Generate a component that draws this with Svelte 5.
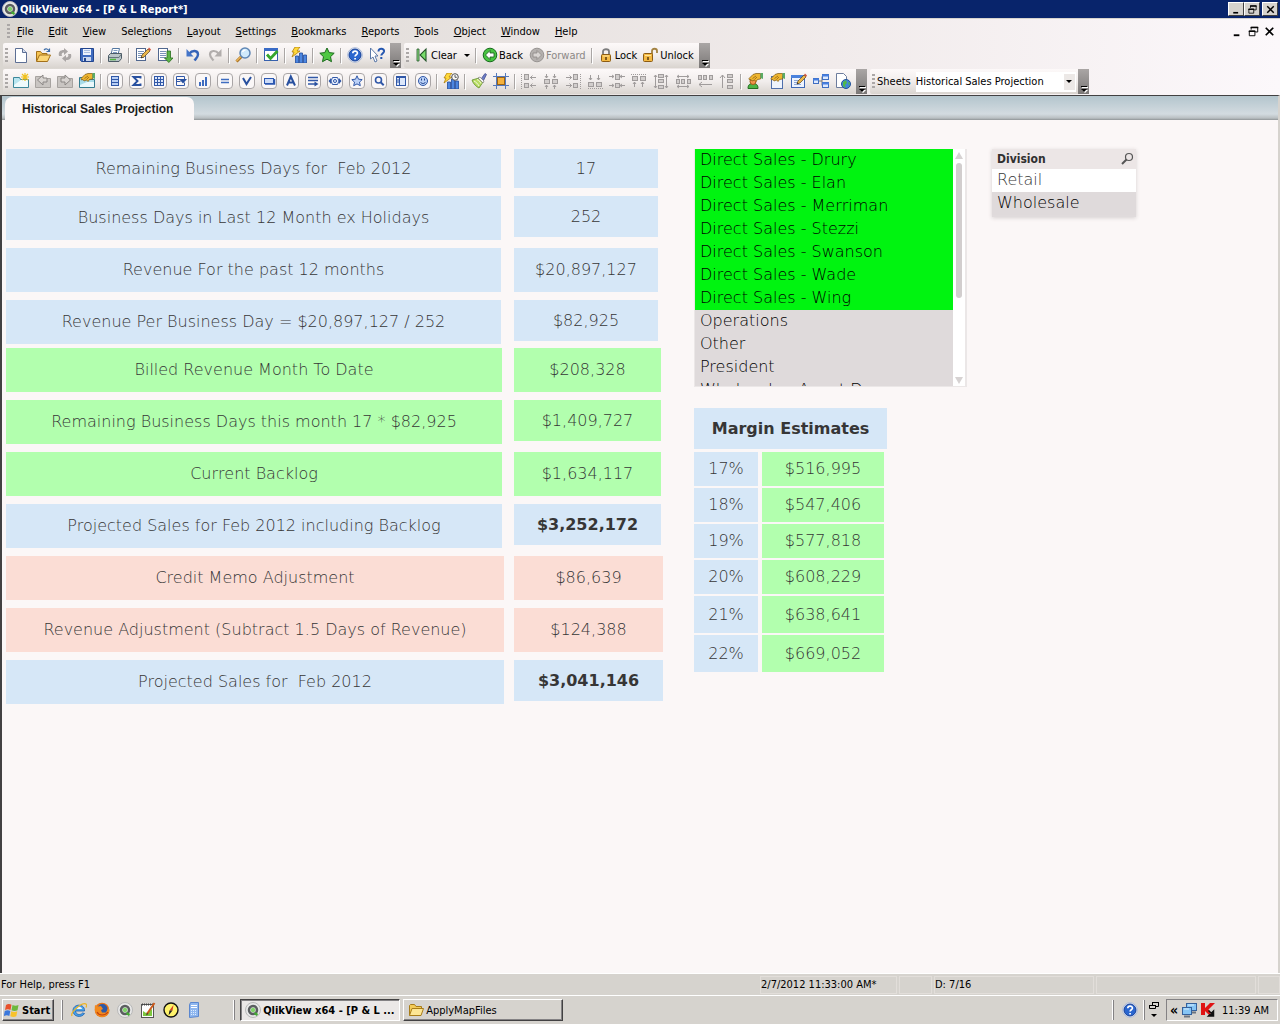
<script>
  const menus = [
    ["", "F", "ile"],
    ["", "E", "dit"],
    ["", "V", "iew"],
    ["Sele", "c", "tions"],
    ["", "L", "ayout"],
    ["", "S", "ettings"],
    ["", "B", "ookmarks"],
    ["", "R", "eports"],
    ["", "T", "ools"],
    ["", "O", "bject"],
    ["", "W", "indow"],
    ["", "H", "elp"],
  ];

  // "|" is a separator
  const standardBar = [
    "new", "open", "reload", "save", "|", "print", "|", "editScript", "report", "|",
    "undo", "redo", "|", "search", "|", "selections", "|", "quickChart", "|",
    "bookmark", "|", "help", "whatsThis",
  ];
  const designBar = [
    "addSheet", "sheetLeft", "sheetRight", "sheetProps", "|",
    "listBox", "statsBox", "tableBox", "multiBox", "chart", "inputBox", "currentSel",
    "button", "text", "lineArrow", "slider", "starObj", "searchObj", "container", "custom", "|",
    "timeChart", "|", "painter", "grid", "|",
    "alignLeft", "centerH", "alignRight", "alignBottom", "centerV", "alignTop",
    "spaceV", "spaceH", "adjustLeft", "adjustTop", "|",
    "userPrefs", "docProps", "variables", "tableViewer", "webView",
  ];

  const rowGroups = [
    {
      size: "small",
      rows: [
        { label: "Remaining Business Days for  Feb 2012", value: "17", tone: "blue", first: true },
        { label: "Business Days in Last 12 Month ex Holidays", value: "252", tone: "blue", low: true },
        { label: "Revenue For the past 12 months", value: "$20,897,127", tone: "blue" },
        { label: "Revenue Per Business Day = $20,897,127 / 252", value: "$82,925", tone: "blue", low: true },
      ],
    },
    {
      size: "medium",
      rows: [
        { label: "Billed Revenue Month To Date", value: "$208,328", tone: "green" },
        { label: "Remaining Business Days this month 17 * $82,925", value: "$1,409,727", tone: "green", low: true },
        { label: "Current Backlog", value: "$1,634,117", tone: "green" },
        { label: "Projected Sales for Feb 2012 including Backlog", value: "$3,252,172", tone: "blue", low: true, strong: true },
      ],
    },
    {
      size: "large",
      rows: [
        { label: "Credit Memo Adjustment", value: "$86,639", tone: "red" },
        { label: "Revenue Adjustment (Subtract 1.5 Days of Revenue)", value: "$124,388", tone: "red" },
        { label: "Projected Sales for  Feb 2012", value: "$3,041,146", tone: "blue", low: true, strong: true },
      ],
    },
  ];

  const margins = [
    ["17%", "$516,995"],
    ["18%", "$547,406"],
    ["19%", "$577,818"],
    ["20%", "$608,229"],
    ["21%", "$638,641"],
    ["22%", "$669,052"],
  ];

  let people = $state([
    { name: "Direct Sales - Drury", selected: true },
    { name: "Direct Sales - Elan", selected: true },
    { name: "Direct Sales - Merriman", selected: true },
    { name: "Direct Sales - Stezzi", selected: true },
    { name: "Direct Sales - Swanson", selected: true },
    { name: "Direct Sales - Wade", selected: true },
    { name: "Direct Sales - Wing", selected: true },
    { name: "Operations", selected: false },
    { name: "Other", selected: false },
    { name: "President", selected: false },
    { name: "Wholesale - Agent D", selected: false },
  ]);

  let divisions = $state([
    { name: "Retail", possible: true },
    { name: "Wholesale", possible: false },
  ]);

  const framed = (inner) =>
    `<rect x=".5" y=".5" width="15" height="15" rx="3.5" fill="#faf7f7" stroke="#a9a5a6"/>${inner}`;
  const page = '<path d="M2.5 1.5h7l4 4v10h-11z" fill="#fff" stroke="#5d6f94"/><path d="M9.5 1.5v4h4" fill="#d5deef" stroke="#5d6f94"/>';
  const lines = '<rect x="1.5" y="1.5" width="9" height="12" fill="#fff" stroke="#50678f"/><path d="M3 4.500h6M3 6.500h6M3 8.500h6M3 10.500h6" stroke="#7b93b8"/>';
  const pencil = '<path d="M6 11l1-3 6-6 2 2-6 6z" fill="#e9b64a" stroke="#5a4320" stroke-width=".7"/><path d="M13 2l1-1.500 2 2-1 1.500z" fill="#d2553e"/><path d="M6 11l.5-1.600 1.200 1z" fill="#222"/>';
  const hand = '<path d="M2 5.500L6 1.500 9 .5h4.500v5.500l-3 .5-1.500 2-1.500-1.500L5 8 4 6.500 2.500 7z" fill="#efb52f" stroke="#7b5611" stroke-width=".7"/><path d="M13.500 0H16v6l-2.500-1z" fill="#5aab66"/><path d="M5.500 5.500L9 3M7.500 6.500L10 4" stroke="#8a5c10" stroke-width=".7"/>';
  const bolt = '<path d="M4 0h5L6 4h3L1 10l2-5H1z" fill="#ffd83a" stroke="#a87400" stroke-width=".7"/>';
  const bars = '<path d="M4.500 9h3v7h-3zM8.500 6h3v10h-3zM12.500 8h3v8h-3z" fill="#4c86e0" stroke="#214b9d" stroke-width=".8"/>';
  const orb = '<circle cx="8" cy="8" r="7.500" fill="#e8e8e8" stroke="#b9b9b9"/><circle cx="8" cy="8" r="4" fill="none" stroke="#5b5e60" stroke-width="2.500"/><circle cx="8" cy="8" r="2.200" fill="#7fd468"/><path d="M9.500 11l3 2" stroke="#43a934" stroke-width="2.500"/>';
  const questionDisc = '<circle cx="8" cy="8" r="7.300" fill="#fff" stroke="#a8b8d8"/><circle cx="8" cy="8" r="6" fill="#2a66cf" stroke="#173f94"/><path d="M5.800 6.300C5.800 3.500 10.500 3.500 10.400 6.200 10.300 7.800 8.100 7.700 8.100 9.600M8.100 11v1.600" fill="none" stroke="#fff" stroke-width="1.700"/>';
  const g = "#a09c9c";
  const box = (x, y, w, h) => `<rect x="${x}.5" y="${y}.5" width="${w}" height="${h}" fill="#d2cecd" stroke="${g}"/>`;
  const stroke = (d, dash = "") => `<path d="${d}" fill="none" stroke="${g}" ${dash ? `stroke-dasharray="${dash}"` : ""}/>`;

  const icons = {
    new: page,
    open: '<path d="M1.500 14V4.500h4l1.500 2h5V8" fill="#f6c453" stroke="#a3701a"/><path d="M1.500 14.500l3-6.500h11l-3 6.500z" fill="#fcd676" stroke="#a3701a"/><path d="M9 3c2-2 4-1 5 1M14.500 1.500v3h-3" fill="none" stroke="#3f6ea8" stroke-width="1.200"/>',
    reload: '<g fill="#aaa6a5"><path d="M2 9c-1-4 1-6 5-6V1l4 3.500L7 8V5.500C5 5.500 4 7 5 9z"/><path d="M14 7c1 4-1 6-5 6v2l-4-3.500L9 8v2.500c2 0 3-1.500 2-3.500z"/></g>',
    save: '<path d="M1.500 1.500h13v13h-12l-1-1z" fill="#3f6bc0" stroke="#23468f"/><rect x="4" y="2" width="8" height="6" fill="#edf2fc"/><path d="M5 3.500h6M5 5.500h6" stroke="#a9bde0"/><rect x="4" y="10" width="8" height="4" fill="#cbd7ef"/><rect x="5" y="11" width="2" height="3" fill="#23468f"/>',
    print: '<path d="M5.500 1.500h7l-1.500 6h-7z" fill="#fff" stroke="#5377a1"/><path d="M6.500 3.500h4M6 5.500h4" stroke="#7d9ac2"/><path d="M1.500 8.500l2-2h11v5l-2.500 3H1.500z" fill="#b9c5c8" stroke="#4c5b66"/><path d="M2 10.500h10l2-3" fill="none" stroke="#65747c"/><path d="M3 12.500h6" stroke="#4fb53f" stroke-width="1.500"/>',
    editScript: `${lines}${pencil}`,
    report: `${lines}<path d="M10 4h3.500v7H16l-4.200 4.500L7.500 11H10z" fill="#5cb548" stroke="#286f1e" stroke-width=".8"/>`,
    undo: '<path d="M4.500 6.500C7 3 13 3 13 7.500c0 2.500-2 4-3.500 6" fill="none" stroke="#3563b8" stroke-width="2.400"/><path d="M1.500 2v7.500h7z" fill="#4474c8"/>',
    redo: '<path d="M11.500 6.500C9 3 3 3 3 7.500c0 2.500 2 4 3.500 6" fill="none" stroke="#b1adac" stroke-width="2.200"/><path d="M14.500 2v7.500h-7z" fill="#b1adac"/>',
    search: '<path d="M1.500 14.500l5-5" stroke="#a97325" stroke-width="3"/><path d="M1.500 14l4.500-4.500" stroke="#ebb65b" stroke-width="1.200"/><circle cx="10" cy="6" r="5" fill="#cfe9fb" stroke="#5e86b5" stroke-width="1.500"/><path d="M7.500 5c.5-1.500 1.500-2 3-2" fill="none" stroke="#fff" stroke-width="1.500"/>',
    selections: '<rect x="1.500" y="1.500" width="13" height="12" fill="#fff" stroke="#3760ad"/><path d="M1 2.500h14" stroke="#3a6bc6" stroke-width="3"/><path d="M4 7.500l3.500 4L14.500 4" fill="none" stroke="#35a62c" stroke-width="2.800"/>',
    quickChart: `${bars}${bolt}`,
    bookmark: '<path d="M8 1l2.200 4.600 5 .6-3.700 3.500 1 5L8 12.200l-4.500 2.500 1-5L.8 6.200l5-.6z" fill="#4fc843" stroke="#1c6a1d"/>',
    help: questionDisc,
    whatsThis: '<path d="M1.500 1l7.500 8H6l2 5-2 1-2-5-2.500 2z" fill="#fff" stroke="#5c79a8"/><path d="M9.500 4.500c0-4 6-3.500 5.500 0-.5 2-2.700 2-2.700 4M12.300 10v2" fill="none" stroke="#2456b0" stroke-width="2"/>',
    addSheet: '<path d="M.5 4.500h6l1 2h8v8H.5z" fill="#b9e5ef" stroke="#3c879a"/><path d="M1 12l7-5h7v7H1z" fill="#eefafc"/><path d="M12 0v8M8 4h8M9 1l6 6M15 1L9 7" stroke="#f0c11e" stroke-width="1.200"/>',
    sheetLeft: '<path d="M.5 3.500h7l1 2h7v9H.5z" fill="#c9c5c2" stroke="#a7a3a0"/><path d="M8 2v3h4v4H8v3L2.500 7z" fill="#d8d4d1" stroke="#8b8785"/>',
    sheetRight: '<path d="M.5 3.500h7l1 2h7v9H.5z" fill="#c9c5c2" stroke="#a7a3a0"/><path d="M8 2v3H4v4h4v3l5.500-5z" fill="#d8d4d1" stroke="#8b8785"/>',
    sheetProps: `<path d="M.5 4.500h6l1 2h8v8H.5z" fill="#a7dbe8" stroke="#347c90"/><path d="M1 12l7-3h7v5H1z" fill="#e9f8fb"/>${hand}`,
    listBox: framed('<rect x="4.500" y="3.500" width="7" height="9" fill="#b9cff5" stroke="#3158a8"/><path d="M4 6.500h8M4 9.500h8" stroke="#3158a8"/>'),
    statsBox: framed('<path d="M11.500 5.500V4h-7l4 4-4 4h7v-1.500" fill="none" stroke="#28509f" stroke-width="1.900"/>'),
    tableBox: framed('<rect x="3.500" y="3.500" width="9" height="9" fill="#dce7fa" stroke="#3158a8"/><path d="M3 6.500h10M3 9.500h10M6.500 3v10M9.500 3v10" stroke="#3158a8"/>'),
    multiBox: framed('<path d="M3.500 3.500h8v3h-8zM3.500 8.500h4M3.500 12.500h8v-3M3.500 6v6.500" fill="none" stroke="#3158a8"/><path d="M6 6h8l-4 4.500z" fill="#28509f"/>'),
    chart: framed('<path d="M4 9h2v4H4zM7 7h2v6H7zM10 4h2v9h-2z" fill="#3e6cc0"/>'),
    inputBox: framed('<path d="M4 6.500h8M4 9.500h8" stroke="#3e6cc0" stroke-width="1.600"/>'),
    currentSel: framed('<path d="M4 5l3.500 6L12 4" fill="none" stroke="#28509f" stroke-width="2"/>'),
    button: framed('<rect x="3.500" y="5.500" width="9" height="5" fill="#cddcf8" stroke="#2c58b2"/><path d="M4 11h9.500V6" fill="none" stroke="#2c58b2" stroke-width="1.500"/>'),
    text: framed('<path d="M4 12.500L7.800 3.500 12 12.500M5.500 9.500h5" fill="none" stroke="#28509f" stroke-width="2"/>'),
    lineArrow: framed('<path d="M3 4.500h10M3 7.500h10M3 11h8" stroke="#3158a8" stroke-width="1.400"/><path d="M9.500 8.500v5L13.500 11z" fill="#28509f"/>'),
    slider: framed('<path d="M4 5L1.500 8 4 11zM12 5l2.500 3L12 11z" fill="#3158a8"/><path d="M5.500 4.500h5l1.500 3.500-1.500 3.500h-5L4 8z" fill="#e9f0fd" stroke="#3158a8"/><circle cx="8" cy="8" r="1.500" fill="none" stroke="#3158a8"/>'),
    starObj: framed('<path d="M8 2.800l1.500 3.400 3.700.4-2.700 2.500.8 3.600L8 10.900l-3.300 1.800.8-3.600-2.700-2.500 3.700-.4z" fill="#bcd1f7" stroke="#3158a8"/>'),
    searchObj: framed('<circle cx="7.500" cy="7" r="3" fill="none" stroke="#3158a8" stroke-width="1.600"/><path d="M9.700 9.200l3 3" stroke="#3158a8" stroke-width="2"/>'),
    container: framed('<rect x="3.500" y="3.500" width="9" height="9" fill="#dce7fa" stroke="#3158a8"/><path d="M3 4.500h10" stroke="#3158a8"/><path d="M6.500 5v7" stroke="#3158a8"/><path d="M4 7h2M4 9h2" stroke="#3158a8"/>'),
    custom: framed('<circle cx="8" cy="8" r="4.500" fill="#b9d0f6" stroke="#3158a8"/><path d="M6.500 5.500v2M9.500 5.500v2" stroke="#1f428e"/><path d="M5.500 9c1 2 4 2 5 0" fill="none" stroke="#1f428e"/>'),
    timeChart: `${bars}${bolt}<circle cx="12" cy="4" r="3.300" fill="#f8f8f8" stroke="#555"/><path d="M12 2v2.300h1.800" fill="none" stroke="#333" stroke-width=".8"/>`,
    painter: '<path d="M10 6l4-5.500 1.500 1-3 6z" fill="#6c7cc4" stroke="#3c468c" stroke-width=".7"/><path d="M1 7l7-2 4 4-4 6c-2-1-6-4-7-8z" fill="#b8dc62" stroke="#5e8e2c" stroke-width=".8"/><path d="M3 8c2 1 4 3 5 5M6 6.500c2 1 3 2 4 4" fill="none" stroke="#f4f9df"/><path d="M7 5l2-1 4 4-1 2z" fill="#f4f4f4" stroke="#666" stroke-width=".6"/>',
    grid: '<path d="M3.500 0v16M12.500 0v16M0 3.500h16M0 12.500h16" stroke="#5579bd"/><rect x="4.500" y="4.500" width="7" height="7" fill="#f5b13c" stroke="#9c6413"/>',
    alignLeft: stroke("M.5 1v15", "1 1") + box(3, 1, 4, 5) + box(3, 10, 4, 4) + stroke("M9 4.500h6M9 12.500h6M11.500 2.500l-2 2 2 2M11.500 10.500l-2 2 2 2"),
    centerH: box(1, 6, 5, 4) + box(9, 6, 5, 4) + stroke("M3.500 1v4M11.500 1v4M3.500 12v4M11.500 12v4M2 3l1.500 2L5 3M10 3l1.500 2L13 3M2 14l1.500-2L5 14M10 14l1.500-2 1.500 2"),
    alignRight: stroke("M15.500 1v15", "1 1") + box(8, 1, 4, 5) + box(8, 10, 4, 4) + stroke("M1 4.500h6M1 12.500h6M4.500 2.500l2 2-2 2M4.500 10.500l2 2-2 2"),
    alignBottom: stroke("M1 15.500h15", "1 1") + box(1, 9, 5, 4) + box(9, 9, 5, 4) + stroke("M3.500 2v5M11.500 2v5M2 5l1.500 2L5 5M10 5l1.500 2L13 5"),
    centerV: box(6, 1, 4, 5) + box(6, 10, 4, 4) + stroke("M0 3.500h5M0 12.500h5M11 3.500h5M11 12.500h5M3 2l2 1.500L3 5M3 11l2 1.500L3 14M13 2l-2 1.500L13 5M13 11l-2 1.500 2 1.500"),
    alignTop: stroke("M0 1.500h16", "1 1") + box(1, 3, 5, 4) + box(9, 3, 5, 4) + stroke("M3.500 9v5M11.500 9v5M2 11l1.500-2L5 11M10 11l1.500-2 1.500 2"),
    spaceV: box(5, 1, 5, 3) + box(5, 6, 5, 3) + box(5, 12, 5, 3) + stroke("M2.500 2v13M13.500 2v13M1 4l1.500-2L4 4M12 4l1.500-2L15 4M1 13l1.500 2L4 13M12 13l1.500 2 1.500-2"),
    spaceH: box(1, 6, 3, 4) + box(6, 6, 3, 4) + box(12, 6, 3, 4) + stroke("M2 3.500h12M2 13.500h12M4 2L2 3.500 4 5M12 2l2 1.500L12 5M4 12l-2 1.500L4 15M12 12l2 1.500-2 1.500"),
    adjustLeft: box(1, 2, 3, 4) + box(6, 2, 3, 4) + box(12, 2, 3, 4) + stroke("M2 11.500h13M5 9l-3 2.500L5 14"),
    adjustTop: box(8, 1, 5, 3) + box(8, 6, 5, 3) + box(8, 12, 5, 3) + stroke("M3.500 2v13M1 5l2.500-3L6 5"),
    userPrefs: `<path d="M1 15.500c0-4 2-5 5-5s5 1 5 5z" fill="#4db546" stroke="#226f21"/><circle cx="6" cy="8.500" r="3" fill="#f0954b" stroke="#a35c18"/>${hand}`,
    docProps: `<rect x="2.500" y="3.500" width="11" height="12" fill="#eef3fc" stroke="#4f6fab"/>${hand}`,
    variables: `<rect x=".5" y="2.500" width="13" height="12" fill="#eef4ff" stroke="#3e68b6"/><path d="M0 3.500h14" stroke="#4b82dd" stroke-width="3"/><path d="M3 7.500h6M3 9.500h5M3 11.500h7" stroke="#8fa8d5"/>${pencil}`,
    tableViewer: '<path d="M5 8h4M9 3.500v9" stroke="#777"/><g fill="#dce9ff" stroke="#3f6ec1"><rect x=".5" y="5.500" width="5" height="5"/><rect x="9.500" y="1.500" width="6" height="5"/><rect x="9.500" y="9.500" width="6" height="5"/></g><path d="M0 6.500h6M9 2.500h7M9 10.500h7" stroke="#477fe0" stroke-width="2"/>',
    webView: '<path d="M1.500.5h7l3 3v11h-10z" fill="#fff" stroke="#6d7d9d"/><circle cx="11" cy="11" r="4.500" fill="#3f86dd" stroke="#225297"/><path d="M8 9l3-2 1 3-2 2 1 3-3-2zM13 9l2 1-1 3z" fill="#51b848"/>',
    clear: '<path d="M3 2h2v12H3z" fill="#8fdf85" stroke="#24552a" stroke-width=".8"/><path d="M12 2v12L6 8z" fill="#79dc6c" stroke="#24552a" stroke-width="1.100"/>',
    back: '<circle cx="8" cy="8" r="6.800" fill="#48c441" stroke="#17691d"/><path d="M8 3.500v2.500h4v4H8v2.500L3.500 8z" fill="#fff" stroke="#17551b" stroke-width=".8"/>',
    forward: '<circle cx="8" cy="8" r="6.800" fill="#b4b0ae" stroke="#989492"/><path d="M8 3.500v2.500H4v4h4v2.500L12.500 8z" fill="#d8d4d2" stroke="#8d8987" stroke-width=".8"/>',
    lock: '<path d="M5 8V4.500c0-3 6-3 6 0V8" fill="none" stroke="#7d7d7d" stroke-width="1.800"/><rect x="3.500" y="7.500" width="9" height="7" rx="1" fill="#f3b944" stroke="#8c5b12"/><path d="M5 9h6" stroke="#ffe49c"/><path d="M8 10v3" stroke="#5b3c0c" stroke-width="1.500"/>',
    unlock: '<path d="M9 8V4c0-3 5-3 5 0v2" fill="none" stroke="#a38241" stroke-width="1.800"/><rect x=".5" y="6.500" width="9" height="8" rx="1" fill="#f3b944" stroke="#8c5b12"/><path d="M2 8.500h6" stroke="#ffe49c"/><path d="M5 10v3" stroke="#5b3c0c" stroke-width="1.500"/>',
    qlik: orb,
    windows: '<path d="M2 3c2-1.500 4-1 5.500-.3L6.500 8C5 7.200 3 7 1 8z" fill="#e8502a"/><path d="M8.500 3c2 1 4 1 6 0l-1 5.200c-2 1-4 1-6 0z" fill="#6cb83c"/><path d="M.8 9c2-1 4-.8 5.500 0l-1 5c-1.500-1-3.500-1-5.500 0z" fill="#3b78dc"/><path d="M7.300 9.300c2 1 4 1 6 0l-1 5c-2 1-4 1-6 0z" fill="#f7c22c"/>',
    ie: '<path d="M13 9H4.500c.5 4 5 4.500 7 2l2 .5C11 16 2 15.500 2 8.500 2 1.500 14 1 13.500 9z" fill="#48a3ec" stroke="#1c5fae" stroke-width=".8"/><path d="M5 7h6c-.5-3-5.500-3-6 0z" fill="#eaf5ff"/><path d="M1 14C-1 10 12-1 15.500 2.500c.5 1 0 2-.5 3" fill="none" stroke="#edb528" stroke-width="1.300"/>',
    firefox: '<circle cx="8" cy="8" r="7.300" fill="#e87417"/><circle cx="8.500" cy="7" r="5" fill="#2c59a8"/><path d="M1 3l3 1.500 3-.5 2 3-2 1 1 2.500 4 0 2.500-5 1 3C15 14 10 15.500 7 15 2 14 0 9 1 3z" fill="#f28a1e"/><path d="M3 10c2 4 8 4 11 0" fill="none" stroke="#c4430f" stroke-width="1.200"/>',
    notepad: '<rect x="1.500" y="2.500" width="12" height="13" fill="#fdfdfd" stroke="#555"/><path d="M2 2.500h11" stroke="#444" stroke-width="2" stroke-dasharray="1 1"/><path d="M3 9l3 2 6-4v7H3z" fill="#7cc73e"/><path d="M7 12L14.500 1" stroke="#cc5b1c" stroke-width="2"/><path d="M6 13.500l1-2.500 1.300 1z" fill="#333"/>',
    compass: '<circle cx="8" cy="8" r="7" fill="#fff36c" stroke="#111" stroke-width="1.400"/><path d="M6.500 8.500l4-5.500-1 5.500z" fill="#d83b20"/><path d="M9.500 8.500l-4 5 1-5z" fill="#222"/>',
    server: '<path d="M4.500.5h8v14l-9 1V3z" fill="#8fb7ef" stroke="#5b87cf"/><path d="M5 3.500h6M5 5.500h6" stroke="#fff"/><path d="M5 8.500h6M5 10.500h6M5 12.500h6" stroke="#dcecff" stroke-dasharray="1 1"/>',
    folder: '<path d="M1.500 13.500v-10l1-1h4l1.500 2h5.500v2" fill="#f3cb58" stroke="#a87c18"/><path d="M1.500 13.500l2.500-7h11.500l-2.500 7z" fill="#fde694" stroke="#a87c18"/>',
    network: '<g fill="#86c5f5" stroke="#35619c"><rect x="4.500" y="1.500" width="10" height="7"/><rect x=".5" y="5.500" width="9" height="7"/></g><path d="M2 14.500h6M10 10.500h4" stroke="#6c7580" stroke-width="2"/><path d="M6 3h6M2 7h5" stroke="#d9f0ff"/>',
    antivirus: '<path d="M1 1h4v5l5-5h5L8.500 7.500 11 11l-2 2-4-4v4H1z" fill="#e01313"/><path d="M8.500 8.500l4 4M13.500 9v5h-5z" fill="#111" stroke="#111" stroke-width="1.500"/>',
    minimize: '<path d="M4 12h6" stroke="#000" stroke-width="2"/>',
    restore: '<path d="M5.500 6V3.500h7v5H10M5 3.500h8M3.500 7.500h6v5h-6zM3 7.500h7" fill="none" stroke="#000"/><path d="M5 4h8M3 8h7" stroke="#000"/>',
    close: '<path d="M4 4l8 8M12 4l-8 8" stroke="#000" stroke-width="1.800"/>',
    magnifier: '<circle cx="10" cy="6" r="3.500" fill="none" stroke="#555" stroke-width="1.200"/><path d="M7.500 8.500L3 13" stroke="#555" stroke-width="2"/>',
  };

  const quickLaunch = ["ie", "firefox", "qlik", "notepad", "compass", "server"];
  const windowButtons = ["minimize", "restore", "close"];

  let sheet = $state("Historical Sales Projection");
</script>

{#snippet icon(name)}
  <svg class="icon" viewBox="0 0 16 16" aria-hidden="true">{@html icons[name]}</svg>
{/snippet}

{#snippet tools(items)}
  {#each items as item}
    {#if item === "|"}
      <span class="sep"></span>
    {:else}
      <button class="tool" aria-label={item}>{@render icon(item)}</button>
    {/if}
  {/each}
{/snippet}

{#snippet overflow()}
  <button class="overflow" aria-label="Toolbar options">
    <svg viewBox="0 0 11 25" aria-hidden="true">
      <path d="M4 18.500h6" stroke="#fff" /><path d="M3 17.500h6" stroke="#000" />
      <path d="M4 21h6l-3 3z" fill="#fff" /><path d="M3 20h6l-3 3z" fill="#000" />
    </svg>
  </button>
{/snippet}

<div class="app">
  <header class="titlebar">
    {@render icon("qlik")}
    <h1>QlikView x64 - [P & L Report*]</h1>
    <div class="window-buttons">
      {#each windowButtons as name}
        <button class={name} aria-label={name}>{@render icon(name)}</button>
      {/each}
    </div>
  </header>

  <div class="bars">
    <nav class="menubar">
      <span class="grip"></span>
      {#each menus as [before, key, after]}
        <button>{before}<u>{key}</u>{after}</button>
      {/each}
      <div class="mdi-buttons">
        {#each windowButtons as name}
          <button aria-label="{name} document">{@render icon(name)}</button>
        {/each}
      </div>
    </nav>

    <div class="toolbar-row">
      <div class="toolbar">
        <span class="grip"></span>
        {@render tools(standardBar)}
        {@render overflow()}
      </div>
      <div class="toolbar">
        <span class="grip"></span>
        <button class="labelled">{@render icon("clear")}Clear<span class="caret"></span></button>
        <span class="sep"></span>
        <button class="labelled">{@render icon("back")}Back</button>
        <button class="labelled" disabled>{@render icon("forward")}Forward</button>
        <span class="sep"></span>
        <button class="labelled">{@render icon("lock")}Lock</button>
        <button class="labelled">{@render icon("unlock")}Unlock</button>
        {@render overflow()}
      </div>
    </div>

    <div class="toolbar-row">
      <div class="toolbar">
        <span class="grip"></span>
        {@render tools(designBar)}
        {@render overflow()}
      </div>
      <div class="toolbar">
        <span class="grip"></span>
        <label for="sheets">Sheets</label>
        <div class="combo">
          <select id="sheets" bind:value={sheet}>
            <option>Historical Sales Projection</option>
          </select>
          <span class="combo-arrow"><span class="caret"></span></span>
        </div>
        {@render overflow()}
      </div>
    </div>
  </div>

  <main class="document">
    <div class="tabs" role="tablist">
      <button class="tab" role="tab" aria-selected="true">Historical Sales Projection</button>
    </div>

    <div class="sheet">
      <table class="projection">
        {#each rowGroups as group}
          <tbody class={group.size}>
            {#each group.rows as row}
              <tr>
                <th scope="row"><div class="cell {row.tone}" class:first={row.first}>{row.label}</div></th>
                <td>
                  <div
                    class="cell {row.tone}"
                    class:first={row.first}
                    class:low={row.low}
                    class:strong={row.strong}
                  >{row.value}</div>
                </td>
              </tr>
            {/each}
          </tbody>
        {/each}
      </table>

      <div class="middle">
        <div class="listbox">
          <ul>
            {#each people as person}
              <li>
                <button
                  class:selected={person.selected}
                  aria-pressed={person.selected}
                  onclick={() => (person.selected = !person.selected)}>{person.name}</button>
              </li>
            {/each}
          </ul>
          <div class="scrollbar">
            <span class="up"></span>
            <span class="thumb"></span>
            <span class="down"></span>
          </div>
        </div>

        <table class="margins">
          <caption>Margin Estimates</caption>
          <tbody>
            {#each margins as [percent, amount], i}
              <tr class:tall={i > 3}>
                <th scope="row"><div class="cell blue">{percent}</div></th>
                <td><div class="cell green">{amount}</div></td>
              </tr>
            {/each}
          </tbody>
        </table>
      </div>

      <section class="division">
        <h2>Division {@render icon("magnifier")}</h2>
        <ul>
          {#each divisions as division}
            <li><button class:possible={division.possible}>{division.name}</button></li>
          {/each}
        </ul>
      </section>
    </div>
  </main>

  <div class="statusbar">
    <span class="hint">For Help, press F1</span>
    <span class="pane stamp">2/7/2012 11:33:00 AM*</span>
    <span class="pane tiny"></span>
    <span class="pane wide">D: 7/16</span>
    <span class="pane wide"></span>
    <span class="pane end"></span>
  </div>

  <footer class="taskbar">
    <button class="start">{@render icon("windows")}Start</button>
    <span class="divider"></span>
    <div class="quick">
      {#each quickLaunch as name}
        <button aria-label={name}>{@render icon(name)}</button>
      {/each}
    </div>
    <span class="divider"></span>
    <button class="task active">{@render icon("qlik")}QlikView x64 - [P & L ...</button>
    <button class="task">{@render icon("folder")}ApplyMapFiles</button>
    <div class="right">
      <span class="divider"></span>
      <button class="lang" aria-label="Help">{@render icon("help")}</button>
      <span class="divider"></span>
      <div class="lang-options">
        <svg viewBox="0 0 10 18" aria-hidden="true">
          <path d="M3.500 4V1.500h6v4H7M.500 4.500h6v3h-6zM3 1.500h7M0 4.500h7" fill="none" stroke="#000" />
          <path d="M2 13h6l-3 3z" />
        </svg>
      </div>
      <div class="tray">
        <span class="chevron">«</span>
        {@render icon("network")}
        {@render icon("antivirus")}
        <time>11:39 AM</time>
      </div>
    </div>
  </footer>
</div>

<style>
  :global(body) {
    margin: 0;
    background: #d6d3ce;
  }

  .app {
    display: flex;
    flex-direction: column;
    min-height: 100vh;
    font-family: "DejaVu Sans Condensed", "DejaVu Sans", sans-serif;
    font-size: 11px;
    color: #000;
  }

  button {
    margin: 0;
    padding: 0;
    border: 0;
    background: none;
    color: inherit;
    font: inherit;
  }

  ul {
    margin: 0;
    padding: 0;
    list-style: none;
  }

  .icon {
    display: block;
    flex: none;
    width: 16px;
    height: 16px;
  }

  .titlebar {
    display: flex;
    align-items: center;
    gap: 2px;
    height: 18px;
    padding: 0 2px;
    background: #08246b;
    color: #fff;
  }

  .titlebar h1 {
    margin: 0;
    font-size: 11px;
    font-weight: bold;
  }

  .window-buttons {
    display: flex;
    margin-left: auto;
  }

  .window-buttons button {
    display: flex;
    align-items: center;
    justify-content: center;
    width: 16px;
    height: 14px;
    box-sizing: border-box;
    border: 1px solid;
    border-color: #fff #404040 #404040 #fff;
    background: #d6d3ce;
  }

  .window-buttons .icon {
    width: 13px;
    height: 13px;
  }

  .window-buttons .close {
    margin-left: 2px;
  }

  .bars {
    border-top: 1px solid #d6d3ce;
    background: linear-gradient(to right, #dad6d1, #f1ebeb 65%, #fcf8fb);
  }

  .menubar {
    display: flex;
    align-items: center;
    height: 24px;
    padding-left: 6px;
  }

  .menubar > button {
    padding: 0 8px 0 7px;
  }

  .menubar .grip {
    margin: 0 0 0 1px;
  }

  .mdi-buttons {
    display: flex;
    align-items: center;
    gap: 1px;
    margin-left: auto;
    padding-right: 3px;
  }

  .mdi-buttons .icon {
    width: 15px;
    height: 15px;
  }

  .grip {
    flex: none;
    width: 3px;
    height: 15px;
    margin: 0 2px;
    background: repeating-linear-gradient(to bottom, #aba7a6 0 2px, transparent 2px 4px);
  }

  .toolbar-row {
    display: flex;
    gap: 3px;
    padding: 0 3px 1px;
  }

  .toolbar {
    display: flex;
    align-items: center;
    height: 25px;
    border-radius: 2px;
    background: linear-gradient(to bottom, #fdf9f9, #f1edec 50%, #d9d4cf);
  }

  .tool {
    display: flex;
    justify-content: center;
    width: 22px;
    padding-bottom: 1px;
  }

  .sep {
    flex: none;
    width: 1px;
    height: 15px;
    margin: 0 3px 0 2px;
    background: #aaa6a5;
    box-shadow: 1px 1px #fff;
  }

  .labelled {
    display: flex;
    align-items: center;
    gap: 1px;
    padding: 0 3px 1px;
  }

  .labelled:disabled {
    color: #8c8886;
  }

  .caret {
    border: 3px solid transparent;
    border-top-color: #000;
    border-bottom: 0;
  }

  .labelled .caret {
    margin-left: 6px;
  }

  .overflow {
    width: 11px;
    height: 25px;
    margin-left: 2px;
    background: linear-gradient(to bottom, #aaa6a5, #7b7877);
  }

  .overflow svg {
    display: block;
    width: 11px;
    height: 25px;
  }

  .combo {
    display: flex;
    align-items: center;
    width: 160px;
    height: 20px;
    margin-left: 5px;
    background: #fff;
  }

  .combo select {
    flex: 1;
    min-width: 0;
    height: 18px;
    padding: 0;
    border: 0;
    appearance: none;
    background: none;
    color: #000;
    font: inherit;
  }

  .combo-arrow {
    display: flex;
    align-items: center;
    justify-content: center;
    width: 11px;
    height: 16px;
    margin-right: 1px;
    background: #ece8e6;
  }

  .document {
    display: flex;
    flex: 1;
    flex-direction: column;
    border: solid #424142;
    border-width: 1px 0 0 2px;
    border-right: 2px solid #d6d3ce;
    background: #fbf7f7;
  }

  .tabs {
    display: flex;
    align-items: flex-end;
    height: 24px;
    padding-left: 3px;
    background: linear-gradient(to bottom, #b3c5cd, #d3dbe0 75%, #b9bfc2 92%, #8f9496);
  }

  .tab {
    height: 23px;
    padding: 0 21px 0 17px;
    border-radius: 7px 7px 0 0;
    background: #fbf7f7;
    color: #1c1c1c;
    font: bold 12px "Liberation Sans", Arial, sans-serif;
  }

  .sheet {
    display: flex;
    align-items: flex-start;
    padding: 29px 4px;
    font-family: "DejaVu Sans", Verdana, sans-serif;
    font-size: 16px;
    font-weight: 200;
    line-height: 20px;
  }

  table {
    border-collapse: collapse;
  }

  th,
  td {
    padding: 0;
    font-weight: inherit;
    text-align: center;
    vertical-align: top;
  }

  .cell {
    display: flex;
    align-items: center;
    justify-content: center;
    color: #363636;
    white-space: pre;
  }

  .blue {
    background: #d6e7f7;
  }

  .green {
    background: #b2ffae;
  }

  .red {
    background: #fbddd5;
  }

  .projection {
    flex: 0 1 671px;
    margin-right: 17px;
    table-layout: fixed;
  }

  .projection th {
    width: 508px;
  }

  .projection .cell {
    height: 44px;
    margin-bottom: 8px;
  }

  .projection .cell.first {
    height: 39px;
  }

  .projection .cell.low {
    height: 41px;
  }

  .small th .cell {
    margin-right: 13px;
  }

  .small td .cell {
    margin-right: 19px;
  }

  .small tr:last-child .cell {
    margin-bottom: 4px;
  }

  .medium th .cell {
    margin-right: 12px;
  }

  .medium td .cell {
    margin-right: 16px;
  }

  .large th .cell {
    margin-right: 10px;
  }

  .large td .cell {
    margin-right: 14px;
  }

  .strong {
    font-weight: bold;
  }

  .listbox {
    display: flex;
    height: 237px;
    overflow: hidden;
    border: solid #ebe7e7;
    border-width: 0 2px 1px 1px;
    background: #fff;
  }

  .listbox ul {
    flex: 1;
  }

  .listbox button,
  .division li button {
    display: block;
    width: 100%;
    height: 23px;
    padding: 0 5px 2px;
    background: #dfdadb;
    text-align: left;
    white-space: nowrap;
  }

  .listbox button.selected {
    background: #00f410;
  }

  .scrollbar {
    display: flex;
    flex-direction: column;
    align-items: center;
    width: 12px;
    padding: 3px 0 2px;
    box-sizing: border-box;
  }

  .up,
  .down {
    border: 4px solid transparent;
  }

  .up {
    border-top: 0;
    border-bottom: 7px solid #d6d2d2;
  }

  .down {
    margin-top: auto;
    border-top: 7px solid #d6d2d2;
    border-bottom: 0;
  }

  .thumb {
    width: 6px;
    height: 135px;
    margin-top: 4px;
    border-radius: 3px;
    background: #d2cece;
  }

  .middle {
    flex: 0 0 273px;
    margin-right: 25px;
  }

  .margins {
    width: 193px;
    margin-top: 21px;
    table-layout: fixed;
  }

  .margins caption {
    height: 41px;
    margin-bottom: 3px;
    background: #d6e7f7;
    color: #363636;
    font-weight: bold;
    line-height: 41px;
    white-space: nowrap;
  }

  .margins th {
    width: 68px;
  }

  .margins .cell {
    height: 34px;
    margin-bottom: 2px;
  }

  .margins .tall .cell {
    height: 37px;
  }

  .margins th .cell {
    margin-right: 4px;
  }

  .margins td .cell {
    margin-right: 3px;
  }

  .division {
    width: 144px;
    padding-bottom: 2px;
    background: #e0dbdc;
    box-shadow: 0 1px 4px #d6d0d0;
  }

  .division h2 {
    display: flex;
    align-items: center;
    justify-content: space-between;
    height: 20px;
    margin: 0;
    padding: 0 1px 0 5px;
    box-sizing: border-box;
    background: #ece6e6;
    color: #303030;
    font: bold 12px "DejaVu Sans Condensed", "DejaVu Sans", sans-serif;
  }

  .division li .possible {
    background: #fff;
    color: #363636;
  }

  .statusbar {
    display: flex;
    align-items: center;
    gap: 2px;
    height: 21px;
    border-top: 1px solid #fff;
    border-bottom: 1px solid #fff;
  }

  .hint {
    flex: 1;
    padding-left: 1px;
  }

  .pane {
    height: 18px;
    box-sizing: border-box;
    border: 1px solid #e2deda;
    line-height: 16px;
  }

  .stamp {
    width: 137px;
  }

  .tiny {
    width: 33px;
  }

  .wide {
    width: 160px;
  }

  .end {
    width: 22px;
  }

  .taskbar {
    display: flex;
    align-items: center;
    height: 28px;
    padding: 0 2px;
    box-sizing: border-box;
  }

  .start,
  .task {
    display: flex;
    align-items: center;
    height: 22px;
    box-sizing: border-box;
    border: 1px solid;
    border-color: #fff #424142 #424142 #fff;
    box-shadow: inset -1px -1px #848284;
  }

  .start {
    gap: 2px;
    padding: 0 3px 0 1px;
    margin-right: 8px;
    font-weight: bold;
  }

  .divider {
    flex: none;
    width: 1px;
    height: 20px;
    background: #848284;
    box-shadow: -1px 0 #fff;
  }

  .quick {
    display: flex;
    gap: 7px;
    width: 163px;
    margin: 0 0 0 8px;
  }

  .task {
    flex: 0 1 160px;
    gap: 2px;
    margin-left: 3px;
    padding: 0 4px;
    white-space: nowrap;
  }

  .task.active {
    margin-left: 5px;
    border-color: #424142 #fff #fff #424142;
    box-shadow: inset 1px 1px #848284;
    background: #ebe8e7;
    font-weight: bold;
  }

  .right {
    display: flex;
    align-items: center;
    margin-left: auto;
  }

  .lang {
    margin: 0 6px 0 8px;
  }

  .lang-options {
    width: 10px;
    margin: 0 7px 0 4px;
  }

  .lang-options svg {
    display: block;
    width: 10px;
    height: 18px;
  }

  .tray {
    display: flex;
    align-items: center;
    gap: 2px;
    height: 22px;
    padding: 0 8px 0 3px;
    box-sizing: border-box;
    border: 1px solid;
    border-color: #848284 #fff #fff #848284;
  }

  .chevron {
    width: 8px;
    margin-right: 2px;
    font-size: 14px;
    font-weight: bold;
  }

  .tray time {
    margin-left: 4px;
  }
</style>
